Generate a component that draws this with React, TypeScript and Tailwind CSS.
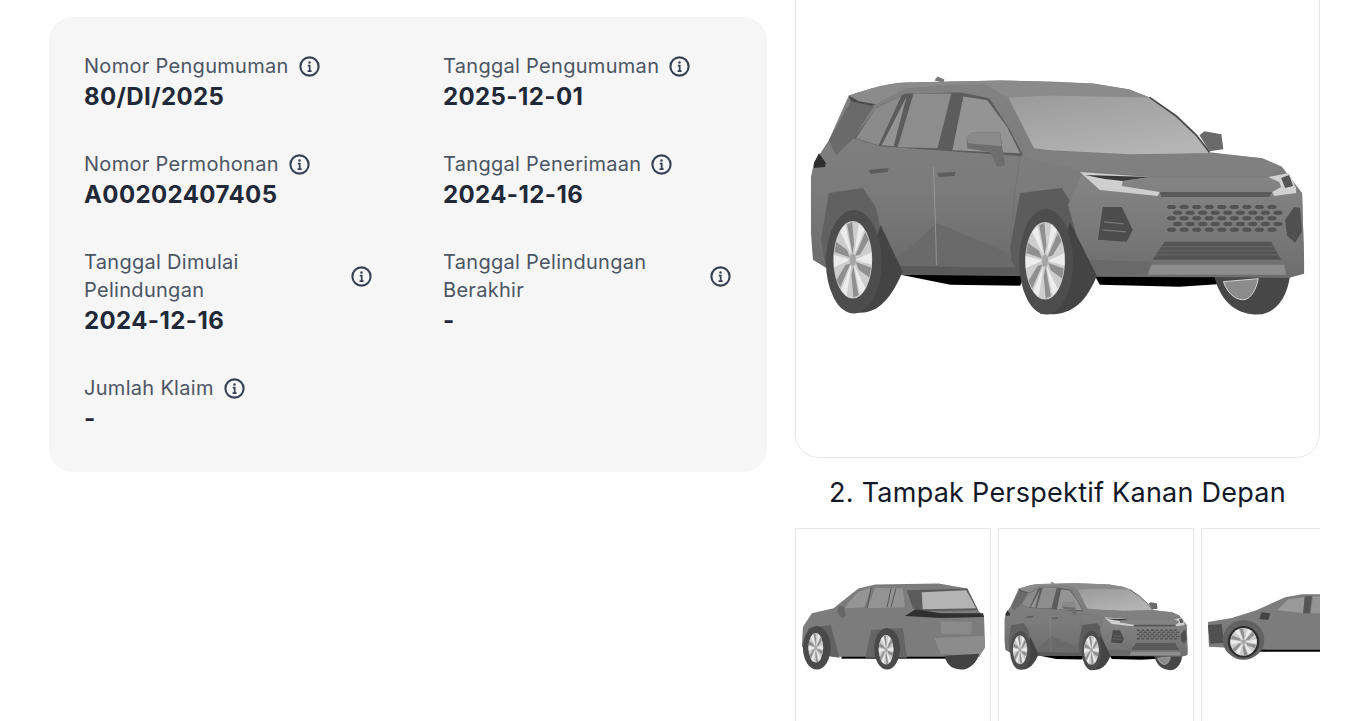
import React from "react";

type Field = { label: React.ReactNode; value: string; wide?: boolean };

const fields: Field[] = [
  { label: "Nomor Pengumuman", value: "80/DI/2025" },
  { label: "Tanggal Pengumuman", value: "2025-12-01" },
  { label: "Nomor Permohonan", value: "A00202407405" },
  { label: "Tanggal Penerimaan", value: "2024-12-16" },
  { label: "Tanggal Dimulai Pelindungan", value: "2024-12-16", wide: true },
  { label: "Tanggal Pelindungan Berakhir", value: "-", wide: true },
  { label: "Jumlah Klaim", value: "-" },
];

const InfoIcon = () => (
  <svg viewBox="0 0 24 24" className="h-[23px] w-[23px] shrink-0" fill="none" stroke="#374151" strokeWidth="2.2">
    <circle cx="12" cy="12" r="9.5" />
    <path d="M10.2 11h2v5.6M10 16.8h4.2" strokeWidth="1.8" />
    <circle cx="12" cy="7.9" r="1.3" fill="#374151" stroke="none" />
  </svg>
);

const Rim = ({ cx, cy, rx, ry }: { cx: number; cy: number; rx: number; ry: number }) => (
  <g>
    <ellipse cx={cx} cy={cy} rx={rx} ry={ry} fill="#cdcdcd" />
    <g transform={`translate(${cx} ${cy}) scale(${rx / 20} ${ry / 20})`}>
      {[10, 70, 130, 190, 250, 310].map((a) => (
        <g key={a} transform={`rotate(${a})`}>
          <path d="M-1 -3L-9 -17L-4 -19L0 -8Z" fill="#8f8f8f" />
          <path d="M1 -3L3 -19.5L9 -17.5L3 -6Z" fill="#ececec" />
        </g>
      ))}
      <circle r="3.2" fill="#a5a5a5" />
    </g>
  </g>
);

const CarFrontBody = () => {
  const combs: React.ReactNode[] = [];
  for (let r = 0; r < 5; r++) {
    for (let c = 0; c < 9; c++) {
      const x = 1172 + c * 12.6 + (r % 2 ? 6 : 0);
      const y = 207 + r * 5.7;
      combs.push(
        <polygon
          key={`${r}-${c}`}
          points={`${x - 5},${y} ${x - 3},${y - 2} ${x + 3},${y - 2} ${x + 5},${y} ${x + 3},${y + 2} ${x - 3},${y + 2}`}
          fill="#525252"
        />
      );
    }
  }
  return (
    <g>
      <polygon points="895,274 1025,274 1020,286 950,285" fill="#000" />
      <polygon points="1095,276 1240,277 1225,284 1180,287 1100,285" fill="#000" />
      {/* far front tyre */}
      <path d="M1215 277C1222 305 1240 315 1258 315C1275 315 1288 300 1291 275Z" fill="#474747" />
      <path d="M1224 282C1229 296 1238 301 1246 300C1252 298 1257 290 1259 279Z" fill="#8c8c8c" stroke="#d5d5d5" strokeWidth="1" />
      {/* body */}
      <path
        d="M848 95C870 88 885 83 905 82L1000 80L1050 81L1093 83L1130 89L1150 97L1177 116L1197 135L1210 152L1263 158L1283 167L1293 180L1303 193L1305 260L1305 273L1290 278L1082 277L900 275L825 268L812 260L810 233L810 177L813 163L828 140Z"
        fill="url(#bodyFill)"
      />
      {/* roof */}
      <path d="M848 95C870 88 885 83 905 82L1000 80L1093 83L1130 89L1150 97L1050 95L1008 97L985 84L950 84L905 88L875 104L858 101Z" fill="#8b8b8b" />
      <polygon points="848,95 858,101 875,104 868,107 850,101" fill="#4a4a4a" />
      {/* rear quarter */}
      <polygon points="850,101 873,106 853,138 835,155 828,140" fill="#6a6a6a" />
      <polygon points="813,163 818,153 825,163 824,167 813,168" fill="#2e2e2e" />
      {/* windows */}
      <path d="M853 138L876 107L905 93L960 92L989 98L1010 130L1023 155L1021 156L950 151L880 146Z" fill="#5c5c5c" />
      <polygon points="855,138 875,108 901,95 878,145" fill="#8b8b8b" />
      <polygon points="906,96 893,146 881,145" fill="#929292" />
      <polygon points="913,93 951,93 937,148 897,147" fill="#8d8d8d" />
      <polygon points="963,96 987,100 1007,127 1020,153 952,150" fill="#949494" />
      {/* windshield */}
      <polygon points="1008,97 1050,95 1150,97 1177,117 1197,135 1210,153 1130,154 1050,150 1034,148" fill="url(#glassFill)" />
      {/* hood */}
      <path d="M1034 150L1130 155L1210 153L1263 158L1283 167L1270 176L1150 176L1080 170L1020 156Z" fill="#808080" />
      <path d="M1150 97L1177 116L1197 135L1210 152" stroke="#4a4a4a" strokeWidth="1.8" fill="none" />
      {/* far mirror */}
      <path d="M1200 135L1205 131L1222 134L1224 149L1210 151Z" fill="#6a6a6a" />
      {/* cladding */}
      <path d="M820 240L828 193L862 188L875 207L887 263L887 275L825 268Z" fill="#616161" />
      <path d="M1010 247L1020 193L1062 188L1078 215L1085 260L1082 276L1012 276Z" fill="#5c5c5c" />
      <path d="M887 263L907 250L937 223L1007 253L1013 263L1017 275L887 275Z" fill="#6a6a6a" />
      <path d="M887 266L1017 268L1017 275L887 275Z" fill="#5a5a5a" />
      <path d="M933 167L935 225M935 225L936 265" stroke="#a0a0a0" strokeWidth="0.8" fill="none" />
      <path d="M1020 156L1015 190L1010 240" stroke="#6e6e6e" strokeWidth="0.8" fill="none" />
      <path d="M868 170L888 168L887 172L870 174Z" fill="#5c5c5c" />
      <path d="M937 173L955 172L954 176L939 177Z" fill="#5c5c5c" />
      {/* bumper and fascia */}
      <path d="M1082 174L1150 178L1272 178L1297 190L1303 193L1305 260L1305 274L1290 278L1150 276L1090 268L1078 240L1068 205Z" fill="url(#noseFill)" />
      <polygon points="1160,192 1273,192 1270,197 1162,197" fill="#5a5a5a" />
      <polygon points="1080,172 1150,177 1123,181 1122,186 1160,192 1158,196 1120,192 1100,190" fill="#cfcfcf" />
      <polygon points="1085,175 1150,177 1123,181 1105,179" fill="#3a3a3a" />
      <polygon points="1269,177 1290,173 1297,188 1297,193 1275,196 1273,192 1282,187 1280,182" fill="#d0d0d0" />
      <polygon points="1282,178 1290,175 1294,186 1286,188" fill="#555" />
      {combs}
      <polygon points="1103,207 1122,207 1133,230 1127,242 1098,240" fill="#4c4c4c" />
      <path d="M1104 222L1124 224M1103 230L1126 232" stroke="#777" strokeWidth="1.4" />
      <polygon points="1295,207 1301,208 1303,232 1296,243 1288,236 1286,220" fill="#505050" />
      <polygon points="1165,242 1272,242 1282,260 1153,260" fill="#555" />
      <path d="M1161 247H1276M1158 251H1278M1155 255H1280" stroke="#6d6d6d" strokeWidth="0.8" />
      <polygon points="1152,265 1285,265 1287,275 1148,275" fill="#8d8d8d" />
      <polygon points="1090,260 1152,262 1148,275 1095,272" fill="#696969" />
      {/* wheels */}
      <path d="M850 312C875 318 890 300 902 272L880 225Z" fill="#444" />
      <ellipse cx="853" cy="262" rx="28" ry="52" fill="#4d4d4d" />
      <Rim cx={852} cy={260} rx={19.5} ry={39} />
      <path d="M1040 314C1070 318 1085 305 1097 276L1070 222Z" fill="#444" />
      <ellipse cx="1046" cy="262" rx="27" ry="53" fill="#4d4d4d" />
      <Rim cx={1045} cy={261} rx={20} ry={39} />
      {/* mirror */}
      <path d="M966 137L972 132L1000 132L1002 147L1005 165L997 167L990 152L967 148Z" fill="#6e6e6e" />
      <path d="M966 137L972 132L1000 132L1001 146L968 143Z" fill="#8a8a8a" />
      <path d="M934 80L937 76L944 79L943 82Z" fill="#777" />
    </g>
  );
};

const CarRear = () => (
  <svg viewBox="0 0 196 196" className="block h-full w-full blur-[0.3px]">
    <rect x="46" y="118" width="112" height="13" fill="#000" />
    <path d="M6 119L7 99L16 85L38 80L48 72L63 60L80 56L144 55L173 60L184 82L190 89L191 119L185 129L38 129L12 124Z" fill="#7c7c7c" />
    <polygon points="49,80 62,64 76,59 69,79" fill="#959595" />
    <polygon points="80,59 108,60 110,79 72,80" fill="#939393" />
    <path d="M76 59L72 80M96 60L92 79M101 60L96 79" stroke="#555" strokeWidth="1" />
    <polygon points="112,62 173,60 184,82 128,83 118,80" fill="#5c5c5c" />
    <polygon points="127,64 172,62 182,80 128,81" fill="#b4b4b4" />
    <polygon points="110,88 121,81 146,85 189,85 190,89 146,90" fill="#2f2f2f" />
    <polygon points="146,93 178,94 177,106 147,106" fill="#8a8a8a" />
    <path d="M140 110L190 108L191 120L185 129L146 126Z" fill="#8c8c8c" />
    <polygon points="43,78 49,78 50,88 46,90 42,84" fill="#666" />
    <path d="M10 125L12 100L35 97L44 130Z" fill="#626262" />
    <path d="M70 130L76 102L108 100L112 130Z" fill="#656565" />
    <path d="M150 128C153 140 160 142 170 142C178 140 184 132 185 126Z" fill="#424242" />
    <ellipse cx="21" cy="120" rx="14" ry="22" fill="#4a4a4a" />
    <Rim cx={20} cy={120} rx={7.5} ry={15} />
    <ellipse cx="92" cy="121" rx="13" ry="21" fill="#4a4a4a" />
    <Rim cx={91} cy={122} rx={7.5} ry={15} />
  </svg>
);

const CarSide = () => (
  <svg viewBox="0 0 196 196" className="block h-full w-full blur-[0.3px]">
    <rect x="30" y="115" width="166" height="9" fill="#000" />
    <path d="M6 94L30 90L55 82L84 69L101 66L196 66L196 122L66 122L7 119Z" fill="#7c7c7c" />
    <polygon points="76,82 87,71 103,69 104,85" fill="#999" />
    <polygon points="104,68 111,68 109,85 102,85" fill="#555" />
    <polygon points="112,68 125,68 125,85 110,85" fill="#949494" />
    <polygon points="6,97 20,96 22,115 8,116" fill="#505050" />
    <polygon points="60,84 69,85 67,92 58,91" fill="#444" />
    <ellipse cx="42" cy="112" rx="21" ry="20" fill="#626262" />
    <circle cx="42" cy="114" r="16" fill="#2e2e2e" />
    <Rim cx={42} cy={114} rx={13.5} ry={14} />
  </svg>
);

const CarFrontSvg = ({ className }: { className: string }) => (
  <svg viewBox="795 -67 525 525" className={className}>
    <defs>
      <linearGradient id="bodyFill" x1="0" y1="0" x2="0" y2="1">
        <stop offset="0" stopColor="#828282" />
        <stop offset="0.55" stopColor="#7b7b7b" />
        <stop offset="1" stopColor="#6a6a6a" />
      </linearGradient>
      <linearGradient id="glassFill" x1="0" y1="0" x2="0.6" y2="1">
        <stop offset="0" stopColor="#9a9a9a" />
        <stop offset="1" stopColor="#b4b4b4" />
      </linearGradient>
      <linearGradient id="noseFill" x1="0" y1="0" x2="0" y2="1">
        <stop offset="0" stopColor="#858585" />
        <stop offset="0.6" stopColor="#787878" />
        <stop offset="1" stopColor="#6d6d6d" />
      </linearGradient>
    </defs>
    <CarFrontBody />
  </svg>
);

const Thumb = ({ children }: { children: React.ReactNode }) => (
  <div className="h-[196px] w-[196px] shrink-0 border border-gray-200 bg-white">{children}</div>
);

export default function App() {
  return (
    <div className="flex h-[721px] items-start gap-[28px] overflow-hidden bg-white pl-[49px] pr-[26px] font-['Inter',sans-serif]">
      <div className="mt-[17px] w-[718px] shrink-0 rounded-[24px] bg-[#f6f6f7] px-[35px] pb-[37px] pt-[35px]">
        <div className="grid grid-cols-2 gap-x-[70px] gap-y-[37px]">
          {fields.map((f, i) => (
            <div key={i}>
              <div className={`flex items-center text-[20px] leading-[28px] tracking-[0.3px] text-[#4b5563] ${f.wide ? "justify-between" : "gap-[9px]"}`}>
                <span className={f.wide ? "w-[230px]" : ""}>{f.label}</span>
                <InfoIcon />
              </div>
              <div className="pt-[1px] text-[24px] font-bold leading-[32px] tracking-[0.4px] text-[#1f2937]">{f.value}</div>
            </div>
          ))}
        </div>
      </div>
      <div className="-mt-[67px] w-[525px] shrink-0">
        <div className="h-[525px] w-[525px] rounded-[24px] border border-gray-200 bg-white">
          <CarFrontSvg className="block h-full w-full blur-[0.6px]" />
        </div>
        <div className="mt-[17px] text-center text-[27px] leading-[36px] tracking-[0.25px] text-[#111827]">2. Tampak Perspektif Kanan Depan</div>
        <div className="mt-[17px] flex gap-[7px] overflow-hidden">
          <Thumb>
            <CarRear />
          </Thumb>
          <Thumb>
            <CarFrontSvg className="block h-full w-full blur-[0.3px]" />
          </Thumb>
          <Thumb>
            <CarSide />
          </Thumb>
        </div>
      </div>
    </div>
  );
}
